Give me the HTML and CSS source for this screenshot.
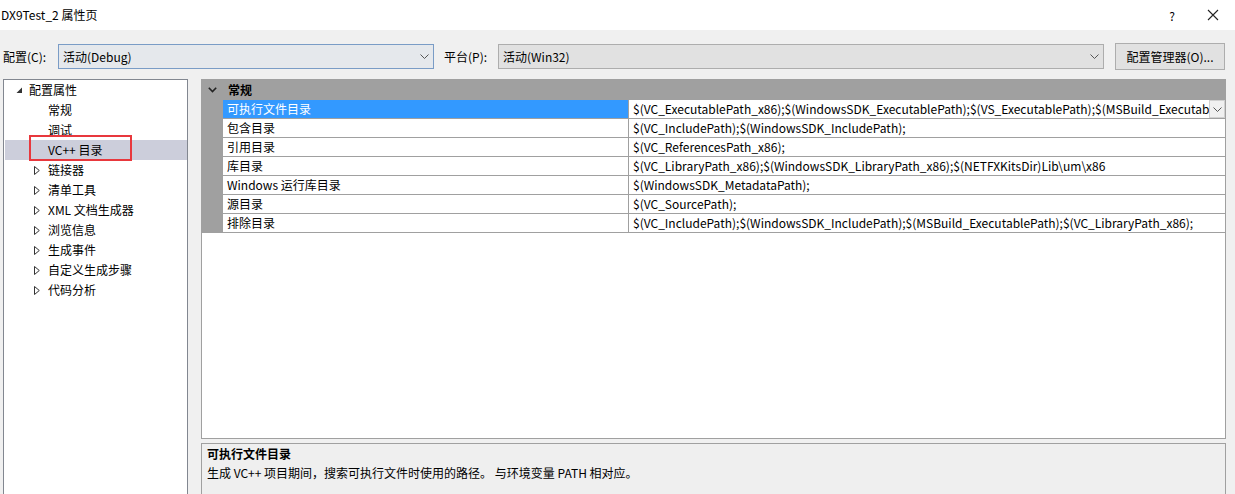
FILE: index.html
```html
<!DOCTYPE html>
<html lang="zh-CN">
<head>
<meta charset="utf-8">
<title>DX9Test_2 属性页</title>
<link rel="stylesheet" href="styles.css">
</head>
<body>
<div class="window">
  <div class="titlebar">
    <span class="title">DX9Test_2 属性页</span>
    <div class="title-btns">
      <span class="help">?</span>
      <svg class="close" width="12" height="12" viewBox="0 0 12 12"><path d="M1 1 L11 11 M11 1 L1 11" stroke="#222" stroke-width="1.1" fill="none"/></svg>
    </div>
  </div>
  <div class="main">
    <div class="toolbar">
      <span class="lbl lbl-config">配置(C):</span>
      <div class="combo combo-config focused">
        <span>活动(Debug)</span>
        <svg class="chev" width="9" height="5" viewBox="0 0 9 5"><path d="M0.5 0.5 L4.5 4.5 L8.5 0.5" stroke="#555" stroke-width="1" fill="none"/></svg>
      </div>
      <span class="lbl lbl-platform">平台(P):</span>
      <div class="combo combo-platform">
        <span>活动(Win32)</span>
        <svg class="chev" width="9" height="5" viewBox="0 0 9 5"><path d="M0.5 0.5 L4.5 4.5 L8.5 0.5" stroke="#555" stroke-width="1" fill="none"/></svg>
      </div>
      <div class="btn">配置管理器(O)...</div>
    </div>
    <div class="content">
      <div class="tree">
        <div class="node root"><svg class="tri" width="7" height="7" viewBox="0 0 7 7"><path d="M6 0.5 L6 6 L0.5 6 Z" fill="#333"/></svg><span>配置属性</span></div>
        <div class="node leaf"><span>常规</span></div>
        <div class="node leaf"><span>调试</span></div>
        <div class="node leaf selected"><span>VC++ 目录</span><div class="mark"></div></div>
        <div class="node child"><svg class="tri2" width="6" height="9" viewBox="0 0 6 9"><path d="M0.5 0.5 L5.3 4.5 L0.5 8.5 Z" stroke="#333" stroke-width="1" fill="none"/></svg><span>链接器</span></div>
        <div class="node child"><svg class="tri2" width="6" height="9" viewBox="0 0 6 9"><path d="M0.5 0.5 L5.3 4.5 L0.5 8.5 Z" stroke="#333" stroke-width="1" fill="none"/></svg><span>清单工具</span></div>
        <div class="node child"><svg class="tri2" width="6" height="9" viewBox="0 0 6 9"><path d="M0.5 0.5 L5.3 4.5 L0.5 8.5 Z" stroke="#333" stroke-width="1" fill="none"/></svg><span>XML 文档生成器</span></div>
        <div class="node child"><svg class="tri2" width="6" height="9" viewBox="0 0 6 9"><path d="M0.5 0.5 L5.3 4.5 L0.5 8.5 Z" stroke="#333" stroke-width="1" fill="none"/></svg><span>浏览信息</span></div>
        <div class="node child"><svg class="tri2" width="6" height="9" viewBox="0 0 6 9"><path d="M0.5 0.5 L5.3 4.5 L0.5 8.5 Z" stroke="#333" stroke-width="1" fill="none"/></svg><span>生成事件</span></div>
        <div class="node child"><svg class="tri2" width="6" height="9" viewBox="0 0 6 9"><path d="M0.5 0.5 L5.3 4.5 L0.5 8.5 Z" stroke="#333" stroke-width="1" fill="none"/></svg><span>自定义生成步骤</span></div>
        <div class="node child"><svg class="tri2" width="6" height="9" viewBox="0 0 6 9"><path d="M0.5 0.5 L5.3 4.5 L0.5 8.5 Z" stroke="#333" stroke-width="1" fill="none"/></svg><span>代码分析</span></div>
      </div>
      <div class="right">
        <div class="grid">
          <div class="cat">
            <svg class="cat-chev" width="9" height="6" viewBox="0 0 9 6"><path d="M0.8 0.8 L4.5 4.6 L8.2 0.8" stroke="#222" stroke-width="1.6" fill="none"/></svg>
            <span>常规</span>
          </div>
          <div class="rows">
            <div class="row"><div class="name sel">可执行文件目录</div><div class="val"><span class="vtext">$(VC_ExecutablePath_x86);$(WindowsSDK_ExecutablePath);$(VS_ExecutablePath);$(MSBuild_ExecutablePath);$(FxCopDir);$(PATH);</span><div class="dd"><svg width="9" height="5" viewBox="0 0 9 5"><path d="M0.5 0.5 L4.5 4.5 L8.5 0.5" stroke="#555" stroke-width="1" fill="none"/></svg></div></div></div>
            <div class="row"><div class="name">包含目录</div><div class="val"><span class="vtext">$(VC_IncludePath);$(WindowsSDK_IncludePath);</span></div></div>
            <div class="row"><div class="name">引用目录</div><div class="val"><span class="vtext">$(VC_ReferencesPath_x86);</span></div></div>
            <div class="row"><div class="name">库目录</div><div class="val"><span class="vtext">$(VC_LibraryPath_x86);$(WindowsSDK_LibraryPath_x86);$(NETFXKitsDir)Lib\um\x86</span></div></div>
            <div class="row"><div class="name">Windows 运行库目录</div><div class="val"><span class="vtext">$(WindowsSDK_MetadataPath);</span></div></div>
            <div class="row"><div class="name">源目录</div><div class="val"><span class="vtext">$(VC_SourcePath);</span></div></div>
            <div class="row"><div class="name">排除目录</div><div class="val"><span class="vtext">$(VC_IncludePath);$(WindowsSDK_IncludePath);$(MSBuild_ExecutablePath);$(VC_LibraryPath_x86);</span></div></div>
          </div>
        </div>
        <div class="desc">
          <div class="desc-title">可执行文件目录</div>
          <div class="desc-text">生成 VC++ 项目期间，搜索可执行文件时使用的路径。 与环境变量 PATH 相对应。</div>
        </div>
      </div>
    </div>
  </div>
</div>
</body>
</html>
```
FILE: styles.css
```css
* { box-sizing: border-box; }
html, body { margin: 0; padding: 0; }
body {
  width: 1235px;
  height: 494px;
  overflow: hidden;
  font-family: "Noto Sans CJK SC", "Noto Sans", sans-serif;
  font-size: 12px;
  color: #000;
  background: #f0f0f0;
}
.window { display: flex; flex-direction: column; height: 494px; }

.titlebar {
  height: 30px;
  background: #fff;
  display: flex;
  align-items: center;
  justify-content: space-between;
  padding: 0 16px 0 1px;
  flex: none;
}
.title { font-size: 12px; line-height: 1; }
.title-btns { display: flex; align-items: center; gap: 32px; }
.help { font-size: 12px; }
.close { display: block; }

.main { flex: 1; display: flex; flex-direction: column; padding: 0 9px 0 3px; min-height: 0; }

.toolbar {
  display: flex;
  align-items: center;
  height: 27px;
  margin-top: 13px;
  flex: none;
}
.lbl { line-height: 1; }
.lbl-config { width: 55px; }
.lbl-platform { width: 54px; margin-left: 10px; }
.combo {
  height: 25px;
  border: 1px solid #adadad;
  background: #e1e1e1;
  display: flex;
  align-items: center;
  justify-content: space-between;
  padding: 0 4px 0 4px;
}
.combo.focused { border-color: #7a9cc6; background: #e5e8ec; }
.combo-config { width: 376px; }
.combo-platform { width: 606px; }
.chev { display: block; }
.btn {
  margin-left: 11px;
  width: 110px;
  height: 27px;
  border: 1px solid #adadad;
  background: #e1e1e1;
  display: flex;
  align-items: center;
  justify-content: center;
}

.content {
  flex: 1;
  display: flex;
  margin-top: 9px;
  min-height: 0;
}
.tree {
  width: 185px;
  border: 1px solid #828790;
  border-bottom: none;
  background: #fff;
  padding: 0 0 0 1px;
  flex: none;
}
.node {
  height: 20px;
  display: flex;
  align-items: center;
  position: relative;
}
.node span { line-height: 1; }
.root { padding-left: 11px; }
.root .tri { margin-right: 6px; display: block; }
.leaf { padding-left: 43px; }
.child { padding-left: 29px; }
.child .tri2 { margin-right: 8px; display: block; }
.selected { background: #cccedb; }
.mark {
  position: absolute;
  left: 24px;
  top: -5px;
  width: 103px;
  height: 26px;
  border: 2px solid #e8383d;
}

.right {
  flex: 1;
  margin-left: 13px;
  display: flex;
  flex-direction: column;
  min-width: 0;
}
.grid {
  height: 360px;
  border: 1px solid #a0a0a0;
  background: #fff;
  flex: none;
  overflow: hidden;
}
.cat {
  height: 20px;
  background: #a0a0a0;
  display: flex;
  align-items: center;
  padding-left: 6px;
  font-weight: bold;
}
.cat-chev { margin-right: 11px; display: block; }
.cat span { line-height: 1; }
.rows {
  border-left: 21px solid #a0a0a0;
}
.row {
  height: 19px;
  display: flex;
  border-bottom: 1px solid #a0a0a0;
}
.name {
  width: 406px;
  flex: none;
  border-right: 1px solid #a0a0a0;
  padding-left: 4px;
  display: flex;
  align-items: center;
  line-height: 1;
}
.name.sel { background: #3399ff; color: #fff; }
.val {
  flex: 1;
  min-width: 0;
  display: flex;
  align-items: center;
  padding-left: 4px;
  overflow: hidden;
}
.vtext { white-space: nowrap; overflow: hidden; flex: 1; min-width: 0; line-height: 18px; height: 18px; }
.dd {
  width: 16px;
  height: 18px;
  flex: none;
  background: #f0f0f0;
  border: 1px solid #d0d0d0;
  display: flex;
  align-items: center;
  justify-content: center;
}
.dd svg { display: block; }

.desc {
  margin-top: 4px;
  flex: 1;
  border: 1px solid #a0a0a0;
  border-bottom: none;
  background: #efefef;
  padding: 0 0 0 5px;
}
.desc-title { font-weight: bold; height: 19px; line-height: 19px; }
.desc-text { height: 19px; line-height: 19px; }
```
